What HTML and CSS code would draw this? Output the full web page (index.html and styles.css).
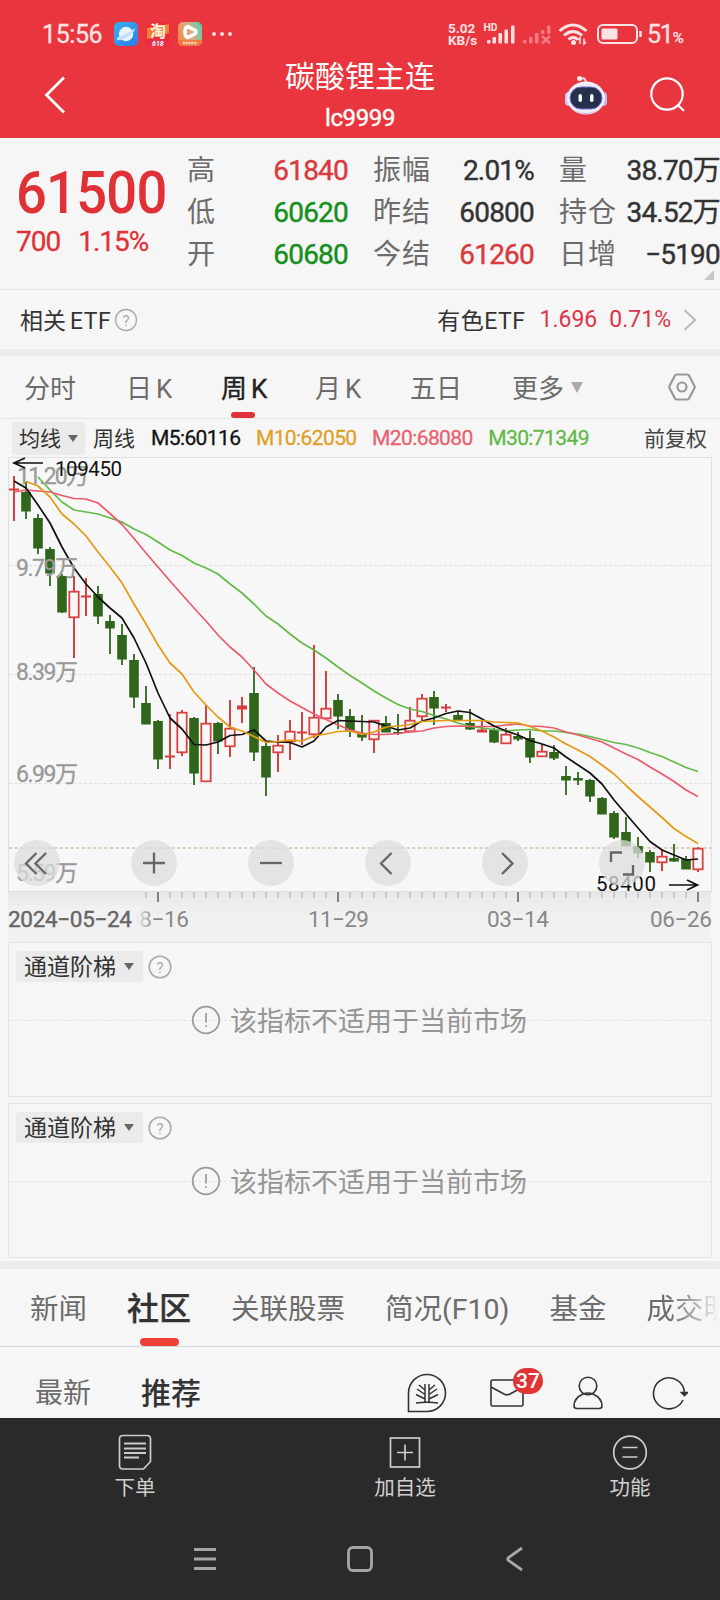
FILE: index.html
```html
<!DOCTYPE html>
<html lang="zh-CN">
<head>
	<meta charset="UTF-8">
	<title>碳酸锂主连 lc9999</title>
	<link rel="stylesheet" href="styles.css">
</head>
<body>
<div class="app">
	<header class="top">
		<div class="status">
			<span class="clock">15:56</span>
			<svg class="app_icon" viewBox="0 0 24 24">
				<defs><linearGradient id="g_blue" x1="0" y1="0" x2="1" y2="1"><stop offset="0" stop-color="#35b0f5"/><stop offset="1" stop-color="#2f7be8"/></linearGradient></defs>
				<rect width="24" height="24" rx="5" fill="url(#g_blue)"/>
				<circle cx="12" cy="12" r="7.2" fill="#e9f5fd"/>
				<path d="M3 18Q2.500 15 6 14Q14 12 21 6Q21 10 15 14Q8 19 3 18Z" fill="#bfe2fb"/>
			</svg>
			<svg class="app_icon" viewBox="0 0 24 24">
				<rect width="24" height="24" rx="5" fill="#ee2b38"/>
				<path d="M1 6L23 2V11L1 17Z" fill="#f5803a"/>
				<text x="4" y="15" font-size="16" font-weight="700" fill="#fff3df">淘</text>
				<rect x="3" y="17.500" width="18" height="6.500" fill="#e32f50"/>
				<text x="6" y="23.500" font-size="7" font-weight="700" font-style="italic" fill="#fff">618</text>
			</svg>
			<svg class="app_icon" viewBox="0 0 24 24">
				<defs><linearGradient id="g_play" x1="0" y1=".6" x2="1" y2=".2"><stop offset="0" stop-color="#f58a4b"/><stop offset=".5" stop-color="#d9b083"/><stop offset="1" stop-color="#59cfae"/></linearGradient></defs>
				<rect width="24" height="24" rx="5" fill="url(#g_play)"/>
				<path d="M0 18H24Q24 24 19 24H5Q0 24 0 18Z" fill="#f07a45"/>
				<path d="M10 4.500L17.500 8.500Q18.500 10 17.500 11.500L10 15.500Q7 15 7 10Q7 5 10 4.500Z" fill="none" stroke="#fff" stroke-width="3.600" stroke-linejoin="round"/>
				<path d="M5 21H19" stroke="#fbd5b8" stroke-width="2.500" stroke-dasharray="2 .7"/>
			</svg>
			<svg class="more_dots" viewBox="0 0 20 6"><circle cx="2" cy="3" r="1.900"/><circle cx="10" cy="3" r="1.900"/><circle cx="18" cy="3" r="1.900"/></svg>
			<div class="speed">5.02<br>KB/s</div>
			<svg class="signal" viewBox="0 0 105 24" fill="#fde3e3">
				<text x="0.500" y="9" font-size="10.500" font-weight="700" textLength="14" lengthAdjust="spacingAndGlyphs">HD</text>
				<rect x="4" y="18" width="3.500" height="3.500" rx="1"/><rect x="9.500" y="15" width="3.500" height="6.500" rx="1"/><rect x="15.500" y="11" width="3.500" height="10.500" rx="1"/><rect x="21.500" y="7.500" width="3.500" height="14" rx="1"/><rect x="28" y="3.500" width="3.500" height="18" rx="1"/>
				<g opacity=".4"><rect x="40" y="18" width="3.500" height="3.500" rx="1"/><rect x="46" y="15" width="3.500" height="6.500" rx="1"/><rect x="52" y="11" width="3.500" height="10.500" rx="1"/><rect x="58" y="8" width="3.500" height="4" rx="1"/><rect x="64" y="3.500" width="3.500" height="8.500" rx="1"/><path d="M59 14L67 21.500M67 14L59 21.500" stroke="#fde3e3" stroke-width="2.500"/></g>
				<g fill="none" stroke="#fde3e3" stroke-width="3"><path d="M76.500 9Q90 -3 103.500 9"/><path d="M81 13.500Q90 5.500 99 13.500"/><path d="M85.500 17.500Q90 13.500 95 17.500"/></g>
				<circle cx="90.500" cy="20.500" r="2.500"/><path d="M97 22V16L95.500 18M101 16.500V22L103 20" fill="none" stroke="#fde3e3" stroke-width="1.500"/>
			</svg>
			<svg class="battery" viewBox="0 0 45 20"><rect x="1" y="1" width="39" height="18" rx="5" fill="none" stroke="#fde3e3" stroke-width="2"/><rect x="4.500" y="4.500" width="16" height="11" rx="1.500" fill="#fde3e3"/><path d="M43.500 7V13" stroke="#fde3e3" stroke-width="2.500"/></svg>
			<span class="level">51<small>%</small></span>
		</div>
		<div class="bar">
			<svg class="back" viewBox="0 0 22 38"><path d="M20 1.500L2.500 19L20 36.500"/></svg>
			<div class="title">
				<h1>碳酸锂主连</h1>
				<p>lc9999</p>
			</div>
			<svg class="robot" viewBox="0 0 44 40">
				<path d="M16 3.500Q22 2 22 8" fill="none" stroke="#f3d6e6" stroke-width="2"/><circle cx="15.500" cy="3.500" r="2.500" fill="#fbeef3"/>
				<rect x="1" y="17" width="8" height="14" rx="4" fill="#cfc9ee"/><rect x="35" y="17" width="8" height="14" rx="4" fill="#c2bdf0"/>
				<ellipse cx="22" cy="23" rx="19" ry="16.500" fill="#eeeefd"/>
				<path d="M8 33Q22 45 36 33Q30 38 22 38Q14 38 8 33Z" fill="#c3b9ee"/>
				<rect x="6" y="12" width="32" height="22" rx="11" fill="#25304d" stroke="#7b70cf" stroke-width="1"/>
				<rect x="14.500" y="19" width="3.500" height="8" rx="1.700" fill="#fff"/><rect x="26" y="19" width="3.500" height="8" rx="1.700" fill="#fff"/>
			</svg>
			<svg class="search" viewBox="0 0 36 36"><circle cx="17" cy="17" r="15.700"/><path d="M28 28L34 34"/></svg>
		</div>
	</header>

	<section class="quote">
		<div class="price">
			<div class="last">61500</div>
			<div class="change"><span>700</span><span>1.15%</span></div>
		</div>
		<dl class="stats">
			<div><dt>高</dt><dd class="up">61840</dd></div>
			<div><dt>振幅</dt><dd>2.01%</dd></div>
			<div><dt>量</dt><dd>38.70万</dd></div>
			<div><dt>低</dt><dd class="down">60620</dd></div>
			<div><dt>昨结</dt><dd>60800</dd></div>
			<div><dt>持仓</dt><dd>34.52万</dd></div>
			<div><dt>开</dt><dd class="down">60680</dd></div>
			<div><dt>今结</dt><dd class="up">61260</dd></div>
			<div><dt>日增</dt><dd>−5190</dd></div>
		</dl>
		<i class="corner"></i>
	</section>

	<section class="etf">
		<span>相关<b>ETF</b></span>
		<svg class="help" viewBox="0 0 24 24"><circle cx="12" cy="12" r="10.500"/><text x="12" y="17.500">?</text></svg>
		<span class="etf_name">有色ETF</span>
		<span class="etf_num">1.696</span>
		<span class="etf_num">0.71%</span>
		<svg class="chevron" viewBox="0 0 14 22"><path d="M1.500 1L12 11L1.500 21"/></svg>
	</section>

	<nav class="periods">
		<a>分时</a><a>日<i>K</i></a><a class="on">周<i>K</i></a><a>月<i>K</i></a><a>五日</a><a class="more">更多</a>
		<svg class="gear" viewBox="0 0 28 28"><path d="M8.500 1.500H19.500Q20.500 1.500 21 2.500L26.500 13Q27 14 26.500 15L21 25.500Q20.500 26.500 19.500 26.500H8.500Q7.500 26.500 7 25.500L1.500 15Q1 14 1.500 13L7 2.500Q7.500 1.500 8.500 1.500Z"/><circle cx="14" cy="14" r="4.500"/></svg>
	</nav>

	<div class="legend">
		<span class="chip"><span>均线</span></span>
		<span class="cycle">周线</span>
		<span class="ma ma5">M5:60116</span>
		<span class="ma ma10">M10:62050</span>
		<span class="ma ma20">M20:68080</span>
		<span class="ma ma30">M30:71349</span>
		<span class="adjust">前复权</span>
	</div>

	<div class="chart">
		<svg id="kline" viewBox="0 7 720 485" width="720" height="485">
			<defs>
				<linearGradient id="g_axis" x1="0" y1="0" x2="0" y2="1"><stop offset="0" stop-color="#e8e8e8"/><stop offset=".5" stop-color="#f1f1f1"/><stop offset="1" stop-color="#f1f1f1"/></linearGradient>
				<linearGradient id="g_fade"><stop offset="0" stop-color="#f1f1f1"/><stop offset=".88" stop-color="#f1f1f1"/><stop offset="1" stop-color="#f1f1f1" stop-opacity="0"/></linearGradient>
			</defs>
			<rect x="8" y="442" width="703" height="50" fill="url(#g_axis)"/>
			<rect x="8.500" y="7.500" width="703" height="434" fill="#f7f7f7" stroke="#e0e0e0"/>
			<path class="grid" d="M9 115.500H711M9 224.500H711M9 333.500H711"/>
			<path class="last_line" d="M9 398H711"/>
			<g id="candles"></g>
			<g id="lines"></g>
			<g id="ticks"></g>
			<g class="scale">
				<text x="17" y="34" textLength="72">11.20万</text>
				<text x="16" y="126" textLength="62">9.79万</text>
				<text x="16" y="230" textLength="62">8.39万</text>
				<text x="16" y="332" textLength="62">6.99万</text>
				<text x="16" y="431" textLength="62">5.59万</text>
			</g>
			<g class="mark">
				<path d="M43 13H14M25 8L14 13L25 18"/>
				<text x="55" y="26" textLength="67">109450</text>
				<path d="M669 435H697M687 430L697.500 435L687 440"/>
				<text x="596" y="440.500" textLength="60">58400</text>
			</g>
			<g class="dates">
				<text x="127" y="477" textLength="62">08−16</text>
				<rect x="8" y="455" width="146" height="32" fill="url(#g_fade)"/>
				<text class="first" x="8" y="477" textLength="124">2024−05−24</text>
				<text x="308" y="477" textLength="61">11−29</text>
				<text x="487" y="477" textLength="62">03−14</text>
				<text x="650" y="477" textLength="62">06−26</text>
			</g>
		</svg>
		<div class="tools">
			<button><svg viewBox="0 0 46 46"><path d="M22.500 13L12 23.500L22.500 34M32 13L21.500 23.500L32 34"/></svg></button>
			<button><svg viewBox="0 0 46 46"><path d="M12 23H34M23 12.500V33.500"/></svg></button>
			<button><svg viewBox="0 0 46 46"><path d="M12 23H34"/></svg></button>
			<button><svg viewBox="0 0 46 46"><path d="M26.500 13L16 23.500L26.500 34"/></svg></button>
			<button><svg viewBox="0 0 46 46"><path d="M20 13L30.500 23.500L20 34"/></svg></button>
			<button><svg viewBox="0 0 46 46"><path d="M12 22V12.500H23M34 25V34.500H24"/></svg></button>
		</div>
	</div>

	<section class="panel">
		<div class="panel_head"><span class="chip"><span>通道阶梯</span></span><svg class="help" viewBox="0 0 24 24"><circle cx="12" cy="12" r="10.800"/><text x="12" y="17.500">?</text></svg></div>
		<p class="empty"><svg viewBox="0 0 30 30"><circle cx="15" cy="15" r="13.300"/><path d="M15 8V17.500M15 20.200V22"/></svg><span>该指标不适用于当前市场</span></p>
	</section>
	<section class="panel panel_last">
		<div class="panel_head"><span class="chip"><span>通道阶梯</span></span><svg class="help" viewBox="0 0 24 24"><circle cx="12" cy="12" r="10.800"/><text x="12" y="17.500">?</text></svg></div>
		<p class="empty"><svg viewBox="0 0 30 30"><circle cx="15" cy="15" r="13.300"/><path d="M15 8V17.500M15 20.200V22"/></svg><span>该指标不适用于当前市场</span></p>
	</section>

	<nav class="tabs">
		<a>新闻</a><a class="on">社区</a><a>关联股票</a><a>简况(F10)</a><a>基金</a><a>成交明细</a>
	</nav>

	<div class="feed">
		<a>最新</a><a class="on">推荐</a>
		<svg class="leek" viewBox="0 0 40 40"><path d="M1.500 38.500V20A18.500 18.500 0 1 1 20 38.500Z"/><path d="M9 30Q20 28.500 31 30M18 29V11M22 29V11M18 17L12 12M18 21.500L10 16M18 26L9 21.500M22 17L28 12M22 21.500L30 16M22 26L31 21.500" stroke-width="1.500"/></svg>
		<span class="mail"><svg viewBox="0 0 34 28"><rect x="1" y="1" width="32" height="26" rx="1.500"/><path d="M1 8L14 15Q17 16.500 20 15L33 8"/></svg><b>37</b></span>
		<svg class="user" viewBox="0 0 30 34"><circle cx="15" cy="10" r="8.800"/><path d="M10 18Q1 22 1 30Q1 32.500 4 32.500H26Q29 32.500 29 30Q29 22 20 18Q15 16 10 18Z"/></svg>
		<svg class="reload" viewBox="0 0 36 34"><path d="M31 24A15.500 15.500 0 1 1 32.500 17"/><path d="M29.500 16.500H35.500L32.500 19.500Z" fill="#333"/></svg>
	</div>

	<footer class="dock">
		<div class="actions">
			<a class="order"><svg viewBox="0 0 36 36"><path d="M6 1.500H30Q33.500 1.500 33.500 5V27.500L26.500 35H6Q2.500 35 2.500 31.500V5Q2.500 1.500 6 1.500Z"/><path d="M7 9.500H29M7 14.500H29M7 19H29M7 23.500H22" stroke-width="1.800"/></svg>下单</a>
			<a class="fav"><svg viewBox="0 0 36 36"><rect x="3.500" y="4" width="29" height="29"/><path d="M10 18.500H26M18 10.500V26.500"/></svg>加自选</a>
			<a class="func"><svg viewBox="0 0 36 36"><circle cx="18" cy="18.500" r="16.300"/><path d="M10.500 13.500H25.500M10.500 23H25.500"/></svg>功能</a>
		</div>
		<div class="sysnav">
			<svg viewBox="0 0 26 26"><path d="M2 3.500H24M2 13H24M2 22.500H24"/></svg>
			<svg viewBox="0 0 26 26"><rect x="1.500" y="1.500" width="23" height="23" rx="4.500"/></svg>
			<svg viewBox="0 0 26 26"><path d="M20 2L6.500 11.500Q5 13 6.500 14.500L20 24"/></svg>
		</div>
	</footer>
</div>

<script>
	// [direction, high, body top, body bottom, low], 1 = up, 0 = down
	var candles = [
		[1,26,39,40,71],[0,32,42,61,69],[0,64,68,98,104],[0,97,99,123,136],[0,124,126,162,163],
		[1,126,141,167,208],[1,128,146,147,166],[0,136,144,166,174],[0,165,171,178,204],[0,174,185,209,215],
		[0,204,210,247,258],[0,236,253,274,274],[0,270,271,309,319],[1,264,306,307,319],[1,260,262,302,306],
		[0,267,268,323,335],[1,255,273,331,331],[0,272,273,291,304],[1,250,278,296,307],[1,247,256,259,273],
		[0,217,243,302,311],[0,293,296,327,346],[1,285,295,302,322],[1,270,281,291,310],[1,262,282,283,295],
		[1,195,267,284,288],[1,221,258,268,270],[0,244,250,266,279],[0,259,266,280,287],[0,265,284,287,291],
		[1,270,270,289,303],[0,266,273,282,282],[0,264,282,283,285],[1,257,270,281,281],[1,244,248,266,270],
		[0,241,247,258,275],[1,254,257,258,262],[0,261,265,270,270],[0,259,273,279,280],[1,271,280,282,282],
		[0,278,280,292,293],[1,278,284,293,293],[0,282,286,289,291],[0,281,288,307,313],[1,294,301,306,307],
		[0,295,302,308,310],[0,316,326,330,345],[0,322,328,330,335],[0,329,330,346,352],[0,347,348,364,364],
		[0,361,363,387,389],[0,367,382,396,396],[0,387,396,403,408],[0,400,402,412,422],[1,399,406,412,421],
		[0,394,408,411,412],[0,406,409,419,419],[1,397,398,419,422]
	];
	var mas = [
		{color:'#62bb46', from:2, y:[27,40,52,60,62,64,68,72,79,84.5,92,100,105.5,113,118,124,134,143,154,166,174,184,193,200,208,217,225.5,233,241,248,254.5,259,261.5,265.5,269,273,276.5,278,279.5,281,280,279.5,281,281,282.5,284,286.5,289.5,292.5,294.5,298,302.5,306.5,312,317.5,321.5]},
		{color:'#ec5a6e', from:0, y:[42,40,41,42,45.5,48.5,49,53,63.5,74.5,88.5,103,117,131,144.5,158,171,185,197,207,220,234,243,251,257.5,264,269.5,275,280,283,284.5,284.5,283.5,282,281,278,276.5,276,276.5,276.5,276.5,275,274,276,276.5,278,282,285,288.5,292,298,304,309.5,317,324,331.5,340,346.5]},
		{color:'#111', from:0, y:[31,38,55,73,97,118,134,147,158,168,188,213,243,268,279,294.5,295,292,285.5,284.5,280,291,292,292.5,297,291,277,270.5,271,271.5,272,276,280,278,271,268,263.5,261,262.5,269,276,281,285,290.5,294,298,307,315,323,334,350,364,378,391.5,400,405,410,409]},
		{color:'#e59a12', from:1, y:[31.5,36,47,64,74,86,102,117,133,154,174,195,213,224,242,255,267,277,281,286.5,292.5,291.5,290,291,286,284,281.5,281,284.5,282,277,276,274.5,271.5,271,270.5,270.5,270.5,270.5,272,272.5,273,276.5,281,287,294,300,306.5,315,324,335.5,346.5,357,367.5,378.5,386.5,393.5]}
	];
	var step = 12, left = 14;
	var out = '';
	for (var i = 0; i < candles.length; i++)
	{
		var c = candles[i], x = left + i * step;
		if (c[0])
		{
			var h = c[3] - c[2];
			out += '<path class="wick_up" d="M' + x + ' ' + c[1] + 'V' + c[2] + 'M' + x + ' ' + c[3] + 'V' + c[4] + '"/>';
			if (h < 4)
			{
				out += '<rect class="flat_up" x="' + (x - 5) + '" y="' + (c[2] - .5) + '" width="10" height="' + (h + 1) + '"/>';
			}
			else
			{
				out += '<rect class="body_up" x="' + (x - 4.7) + '" y="' + (c[2] + .7) + '" width="9.4" height="' + (h - .4) + '"/>';
			}
		}
		else
		{
			out += '<path class="wick_down" d="M' + x + ' ' + c[1] + 'V' + c[4] + '"/>';
			out += '<rect class="body_down" x="' + (x - 4.8) + '" y="' + c[2] + '" width="9.6" height="' + (c[3] - c[2] + .5) + '"/>';
		}
	}
	document.getElementById('candles').innerHTML = out;

	out = '';
	mas.forEach(function (m)
	{
		var pts = m.y.map(function (y, n) { return (left + (n + m.from) * step) + ',' + y; });
		out += '<polyline points="' + pts.join(' ') + '" stroke="' + m.color + '"/>';
	});
	document.getElementById('lines').innerHTML = out;

	out = '';
	for (i = 11; i < candles.length; i++)
	{
		var major = (i - 12) % 15 == 0;
		out += '<path class="' + (major ? 'major' : 'minor') + '" d="M' + (left + i * step) + ' 442V' + (major ? 452 : 448) + '"/>';
	}
	document.getElementById('ticks').innerHTML = out;
</script>
</body>
</html>
```

FILE: styles.css
```css
*
{
	box-sizing: border-box;
}
body
{
	margin: 0;
	background-color: #f6f6f6;
	font-family: Roboto, "Noto Sans CJK SC", sans-serif;
	color: #333;
}
h1, p, dl, dd
{
	margin: 0;
}
i
{
	font-style: normal;
}
svg
{
	display: block;
	flex: none;
}
.app
{
	width: 720px;
	height: 1600px;
	overflow: hidden;
	white-space: nowrap;
}

/* header */
.top
{
	height: 138px;
	background-color: #e9363e;
	color: #fff;
}
.status
{
	display: flex;
	align-items: center;
	height: 68px;
	padding-left: 42px;
	color: #fde3e3;
}
.clock
{
	width: 72px;
	font-size: 25px;
	letter-spacing: -.4px;
	-webkit-text-stroke: .3px #fde3e3;
}
.app_icon
{
	width: 24px;
	height: 24px;
	margin-right: 8px;
}
.more_dots
{
	width: 20px;
	height: 6px;
	margin-left: 2px;
	fill: #fde3e3;
}
.speed
{
	width: 35px;
	margin-left: 216px;
	font-size: 13.5px;
	font-weight: 700;
	line-height: 12.5px;
}
.signal
{
	width: 105px;
	height: 24px;
}
.battery
{
	width: 45px;
	height: 20px;
	margin-left: 9px;
}
.level
{
	margin-left: 5px;
	font-size: 25px;
	letter-spacing: -1.2px;
	-webkit-text-stroke: .3px #fde3e3;
}
.level small
{
	font-size: 15px;
}
.bar
{
	display: flex;
	align-items: center;
	height: 70px;
	padding: 0 34px 16px 44px;
}
.back
{
	width: 22px;
	height: 38px;
	fill: none;
	stroke: #fff;
	stroke-width: 2.8;
}
.title
{
	width: 400px;
	margin-left: 94px;
	padding-top: 16px;
	text-align: center;
}
.title h1
{
	margin-top: -14px;
	font-size: 30px;
	font-weight: 400;
	line-height: 44px;
}
.title p
{
	font-size: 24px;
	line-height: 38px;
	letter-spacing: -.4px;
	-webkit-text-stroke: .4px #fff;
}
.robot
{
	width: 44px;
	height: 40px;
	margin-left: 4px;
}
.search
{
	width: 36px;
	height: 36px;
	margin-left: 42px;
	fill: none;
	stroke: #fff;
	stroke-width: 2.2;
}

/* quote */
.quote
{
	position: relative;
	display: flex;
	height: 152px;
	padding-top: 11px;
	border-bottom: 1px solid #e6e6e6;
}
.price
{
	width: 187px;
	padding: 9px 0 0 16px;
	color: #e03236;
}
.last
{
	font-size: 59px;
	font-weight: 500;
	line-height: 70px;
	letter-spacing: -.8px;
	transform: scaleX(.92);
	transform-origin: 0 0;
}
.change
{
	display: flex;
	gap: 18px;
	font-size: 28px;
	line-height: 28px;
	letter-spacing: -1px;
	-webkit-text-stroke: .3px #e03236;
}
.stats
{
	display: grid;
	grid-template-columns: repeat(3, 161px);
	grid-auto-rows: 42px;
	column-gap: 25px;
}
.stats div
{
	display: flex;
	justify-content: space-between;
	line-height: 44px;
	font-size: 28px;
}
.stats dt
{
	color: #6c6c6c;
	letter-spacing: 1px;
}
.stats dd
{
	margin-right: 0;
	letter-spacing: -.8px;
	-webkit-text-stroke: .4px currentColor;
}
.up
{
	color: #d93a3c;
}
.down
{
	color: #12901a;
}
.corner
{
	position: absolute;
	right: 6px;
	bottom: 9px;
	border-left: 10px solid transparent;
	border-bottom: 10px solid #c9c9c9;
}
.etf
{
	display: flex;
	align-items: center;
	height: 66px;
	padding: 0 23px 0 20px;
	border-bottom: 7px solid #ececec;
	font-size: 23px;
}
.etf > span
{
	margin-top: -2px;
}
.etf b
{
	margin-left: 4px;
	font-weight: 400;
	letter-spacing: .5px;
}
.help
{
	width: 24px;
	height: 24px;
	margin-left: 4px;
	fill: none;
	stroke: #aaa;
	stroke-width: 1.3;
}
.help text
{
	font-size: 15px;
	text-anchor: middle;
	fill: #aaa;
	stroke: none;
}
.etf .help
{
	margin-left: 3px;
}
.etf > .etf_name
{
	margin-left: auto;
	letter-spacing: .5px;
}
.etf > .etf_num
{
	margin: 0 0 0 14px;
	color: #e0334a;
}
.etf > .etf_num + .etf_num
{
	margin-left: 12px;
}
.chevron
{
	width: 14px;
	height: 22px;
	margin-left: 12px;
	fill: none;
	stroke: #bbb;
	stroke-width: 2;
}

/* chart periods */
.periods
{
	display: flex;
	align-items: center;
	height: 63px;
	padding-left: 24px;
	border-bottom: 1px solid #e6e6e6;
	font-size: 26px;
	color: #6c6c6c;
}
.periods a
{
	position: relative;
	top: -1px;
	width: 102px;
}
.periods a:nth-child(2)
{
	width: 95px;
}
.periods a:nth-child(3)
{
	width: 94px;
}
.periods a:nth-child(4)
{
	width: 95px;
}
.periods a i
{
	margin-left: 4px;
}
.periods .on
{
	color: #222;
	-webkit-text-stroke: .4px #222;
}
.periods .on::after
{
	content: "";
	position: absolute;
	left: 10px;
	bottom: -13px;
	width: 24px;
	height: 6px;
	border-radius: 3px;
	background-color: #e23237;
}
.periods .more
{
	display: flex;
	align-items: center;
	width: 156px;
}
.more::after
{
	content: "";
	margin: 2px 0 0 7px;
	border: 6.5px solid transparent;
	border-top: 11px solid #aaa;
	border-bottom: 0;
}
.gear
{
	width: 28px;
	height: 28px;
	fill: none;
	stroke: #999;
	stroke-width: 2.2;
}
.legend
{
	display: flex;
	align-items: center;
	height: 38px;
	padding: 0 13px 0 12px;
	font-size: 21px;
}
.chip
{
	display: flex;
	align-items: center;
	height: 33px;
	padding: 0 7px;
	border-radius: 4px;
	background-color: #ebebeb;
	color: #333;
}
.chip span
{
	margin-top: -3px;
}
.chip::after
{
	content: "";
	margin-left: 7px;
	border: 5.5px solid transparent;
	border-top: 7px solid #666;
	border-bottom: 0;
}
.cycle
{
	margin: -3px 16px 0 8px;
}
.ma
{
	margin-right: 15.5px;
	letter-spacing: -.6px;
	-webkit-text-stroke: .3px currentColor;
}
.ma5
{
	color: #111;
}
.ma10
{
	color: #e09f27;
}
.ma20
{
	color: #e8616f;
}
.ma30
{
	color: #62b946;
}
.adjust
{
	margin: -3px 0 0 auto;
	color: #444;
}

/* k-line */
.chart
{
	position: relative;
	height: 485px;
}
.grid
{
	stroke: #e0e0e0;
	stroke-dasharray: 3 2;
}
.last_line
{
	stroke: #d3c3aa;
	stroke-width: 1.6;
	stroke-dasharray: 3.2 2.4;
}
.wick_up
{
	stroke: #cf3a3a;
	stroke-width: 1.9;
}
.body_up
{
	fill: #f7f7f7;
	stroke: #da4242;
	stroke-width: 1.8;
}
.flat_up
{
	fill: #d83b3b;
}
.wick_down
{
	stroke: #2f661b;
	stroke-width: 1.8;
}
.body_down
{
	fill: #2f661b;
}
#lines
{
	fill: none;
	stroke-width: 1.7;
	stroke-linejoin: round;
}
.minor
{
	stroke: #bbb;
	stroke-width: 1.4;
}
.major
{
	stroke: #777;
	stroke-width: 1.8;
}
.scale
{
	font-size: 23px;
	fill: #999;
	stroke: #999;
	stroke-width: .3;
}
.mark
{
	font-size: 20.5px;
	fill: #111;
}
.mark path
{
	fill: none;
	stroke: #111;
	stroke-width: 1.7;
}
.dates
{
	font-size: 22.5px;
	fill: #888;
}
.dates .first
{
	fill: #666;
	stroke: #666;
	stroke-width: .4;
}
.tools
{
	position: absolute;
	left: 14px;
	top: 383px;
	display: flex;
	gap: 71px;
}
.tools button
{
	width: 46px;
	height: 46px;
	padding: 0;
	border: none;
	border-radius: 50%;
	background-color: rgba(222, 222, 222, .75);
}
.tools svg
{
	fill: none;
	stroke: #666;
	stroke-width: 2.3;
}

/* indicator panels */
.panel
{
	height: 155px;
	margin: 0 8px 6px;
	padding: 8px 7px;
	border: 1px solid #e4e4e4;
	font-size: 23px;
	background: repeating-linear-gradient(90deg, #e4e4e4 0 3px, transparent 3px 5px) 0 77px / 100% 1px no-repeat;
}
.panel_last
{
	margin-bottom: 3px;
}
.panel_head
{
	display: flex;
	align-items: center;
}
.panel .chip
{
	height: 31px;
	padding: 0 9px 0 8px;
}
.panel .chip::after
{
	margin-left: 8px;
}
.panel .help
{
	margin-left: 5px;
	stroke-width: 1.6;
}
.empty
{
	display: flex;
	align-items: center;
	justify-content: center;
	height: 40px;
	margin-top: 18px;
	padding-right: 2px;
	font-size: 27px;
	color: #959595;
}
.empty span
{
	margin-top: -2px;
}
.empty svg
{
	width: 30px;
	height: 30px;
	margin-right: 9px;
	fill: none;
	stroke: #999;
	stroke-width: 1.7;
}

/* community */
.tabs
{
	display: flex;
	align-items: center;
	height: 86px;
	padding: 0 0 3px 30px;
	border-top: 8px solid #ececec;
	border-bottom: 1px solid #d8d8d8;
	gap: 40px;
	font-size: 28.5px;
	color: #6c6c6c;
}
.tabs a
{
	flex: none;
}
.tabs a:last-child
{
	-webkit-mask-image: linear-gradient(90deg, #000 22px, rgba(0, 0, 0, .35) 56px, transparent 72px);
	mask-image: linear-gradient(90deg, #000 22px, rgba(0, 0, 0, .35) 56px, transparent 72px);
}
.tabs .on
{
	position: relative;
	font-size: 32px;
	font-weight: 500;
	color: #333;
	-webkit-text-stroke: .3px #333;
}
.tabs .on::after
{
	content: "";
	position: absolute;
	left: 13px;
	bottom: -17px;
	width: 39px;
	height: 8px;
	border-radius: 4px;
	background-color: #ef4038;
}
.feed
{
	display: flex;
	align-items: center;
	height: 71px;
	padding: 19px 0 0 35px;
	font-size: 28px;
	color: #6c6c6c;
}
.feed a
{
	margin-top: -2px;
}
.feed .on
{
	width: 266px;
	margin-left: 50px;
	font-size: 30px;
	font-weight: 500;
	color: #333;
}
.feed svg
{
	position: relative;
	top: 1px;
	fill: none;
	stroke: #333;
	stroke-width: 1.6;
}
.leek
{
	width: 40px;
	height: 40px;
}
.mail
{
	position: relative;
	margin-left: 43px;
}
.mail svg
{
	width: 34px;
	height: 28px;
}
.mail b
{
	position: absolute;
	left: 23px;
	top: -10px;
	width: 30px;
	height: 26px;
	border-radius: 13px;
	background-color: #e03535;
	color: #fff;
	font-size: 21px;
	font-weight: 500;
	line-height: 26px;
	text-align: center;
}
.user
{
	width: 30px;
	height: 34px;
	margin-left: 49px;
}
.reload
{
	width: 36px;
	height: 34px;
	margin-left: 49px;
}

/* bottom */
.dock
{
	height: 182px;
	background-color: #2a2a2a;
}
.actions
{
	display: flex;
	height: 108px;
	padding: 16px 0 0 90px;
	font-size: 20.5px;
	color: #d0d0d0;
}
.actions a
{
	display: flex;
	flex-direction: column;
	align-items: center;
	gap: 3px;
	width: 90px;
	line-height: 30px;
}
.actions svg
{
	width: 36px;
	height: 36px;
	fill: none;
	stroke: #ccc;
	stroke-width: 1.7;
}
.fav
{
	margin-left: 180px;
}
.func
{
	margin-left: 135px;
}
.sysnav
{
	display: flex;
	gap: 129px;
	padding: 20px 0 0 192px;
}
.sysnav svg
{
	width: 26px;
	height: 26px;
	fill: none;
	stroke: #a6a6a6;
	stroke-width: 2.8;
}
```
